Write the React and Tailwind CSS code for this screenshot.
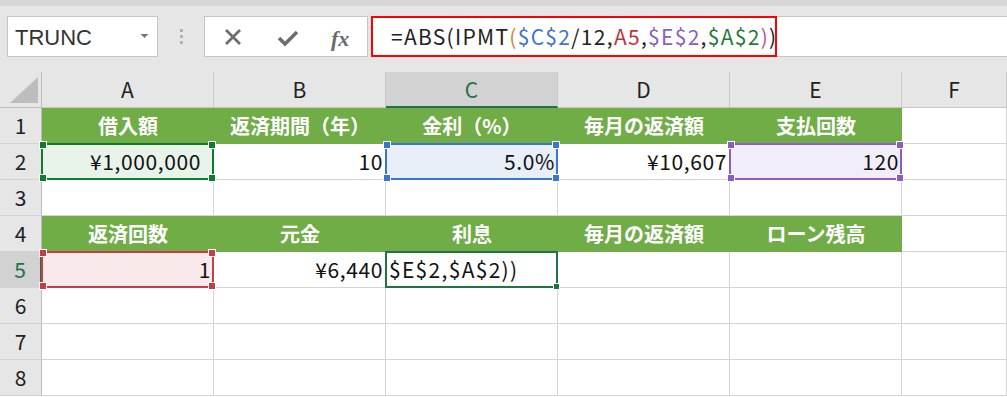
import React from "react";

const FONT = { fontFamily: '"Noto Sans CJK JP", "Noto Sans", sans-serif' };

function Handle({ pos, color }) {
  const p = {
    tl: "-top-[4px] -left-[4px]",
    tr: "-top-[4px] -right-[4px]",
    bl: "-bottom-[4px] -left-[4px]",
    br: "-bottom-[4px] -right-[4px]",
  }[pos];
  return <div className={`absolute ${p} w-[8px] h-[8px] border border-white ${color}`} />;
}

function RangeBox({ border, bg }) {
  return (
    <div className={`absolute -top-px -left-px -right-px -bottom-px border-2 ${border} z-10 pointer-events-none`}>
      <Handle pos="tl" color={bg} />
      <Handle pos="tr" color={bg} />
      <Handle pos="bl" color={bg} />
      <Handle pos="br" color={bg} />
    </div>
  );
}

function Cell({ children, className = "", align = "right", overlay = null, pad = "pr-[2px]" }) {
  return (
    <div
      className={`relative h-[36px] border-r border-b border-[#d4d4d4] flex items-center text-[21px] text-[#111] ${
        align === "right" ? `justify-end tracking-[0.6px] ${pad}` : "justify-start pl-[3px] tracking-[1.3px]"
      } ${className}`}
    >
      <span className="relative z-20 leading-none">{children}</span>
      {overlay}
    </div>
  );
}

function GreenCell({ children }) {
  return (
    <div className="h-[36px] bg-[#70ad47] border-b border-[#70ad47] flex items-center justify-center text-white font-bold text-[20px]">
      <span className="leading-none">{children}</span>
    </div>
  );
}

function RowHead({ n, active }) {
  return (
    <div
      className={`h-[36px] flex items-center justify-center text-[21px] border-b border-[#d4d4d4] ${
        active
          ? "bg-[#d2d2d2] text-[#217346] border-r-2 border-r-[#217346]"
          : "bg-[#e6e6e6] text-[#222] border-r border-r-[#bdbdbd]"
      }`}
    >
      <span className="leading-none">{n}</span>
    </div>
  );
}

function ColHead({ l, active }) {
  return (
    <div
      className={`h-[36px] flex items-center justify-center text-[21px] border-r border-[#c8c8c8] ${
        active ? "bg-[#d2d2d2] text-[#217346] border-b-2 border-b-[#217346]" : "bg-[#e6e6e6] text-[#222] border-b border-b-[#c6c6c6]"
      }`}
    >
      <span className="leading-none">{l}</span>
    </div>
  );
}

export default function App() {
  return (
    <div className="w-[1007px] h-[397px] overflow-hidden bg-white" style={FONT}>
      {/* toolbar */}
      <div className="h-[72px] bg-[#e6e6e6]">
        <div className="h-[6px] bg-[#d8d8d8]" />
        <div className="flex items-center mt-[10px] h-[41px]">
          <div className="ml-[7px] w-[151px] h-[41px] bg-white border border-[#c6c6c6] flex items-center pl-[7px] relative">
            <span className="text-[22px] text-[#333] mt-[2px]" style={{ fontFamily: '"Liberation Sans", Arial, sans-serif' }}>
              TRUNC
            </span>
            <svg className="absolute right-[8px] top-[16px]" width="9" height="6" viewBox="0 0 9 6">
              <path d="M0.5 1 L8.5 1 L4.5 5 Z" fill="#777" />
            </svg>
          </div>
          <div className="w-[46px] flex flex-col items-center gap-[3px]">
            <div className="w-[3px] h-[3px] bg-[#b0b0b0]" />
            <div className="w-[3px] h-[3px] bg-[#b0b0b0]" />
            <div className="w-[3px] h-[3px] bg-[#b0b0b0]" />
          </div>
          <div className="w-[164px] h-[41px] bg-white border border-[#c6c6c6] flex items-center relative">
            <svg className="absolute left-[19px] top-[11px]" width="18" height="18" viewBox="0 0 18 18">
              <path d="M2 2 L16 16 M16 2 L2 16" stroke="#6d6d6d" strokeWidth="2.8" strokeLinecap="butt" />
            </svg>
            <svg className="absolute left-[72px] top-[12px]" width="22" height="18" viewBox="0 0 22 18">
              <path d="M2 9 L8 15 L20 3" stroke="#6d6d6d" strokeWidth="3.6" fill="none" strokeLinejoin="miter" />
            </svg>
            <span
              className="absolute left-[126px] top-[5px] text-[22px] italic font-bold text-[#6a6a6a]"
              style={{ fontFamily: '"Liberation Serif", "Times New Roman", serif' }}
            >
              fx
            </span>
          </div>
          <div className="ml-[3px] w-[406px] h-[41px] bg-white border-2 border-[#ff0000] flex items-center pl-[18px]">
            <span className="text-[21px] tracking-[1.3px] text-[#222] leading-none whitespace-nowrap">
              =ABS(IPMT<span className="text-[#c98a3c]">(</span>
              <span className="text-[#3e74d0]">$C$2</span>/12,
              <span className="text-[#c2343d]">A5</span>,
              <span className="text-[#8d5cc7]">$E$2</span>,
              <span className="text-[#1f7a3a]">$A$2</span>
              <span className="text-[#c8508e]">)</span>)
            </span>
          </div>
          <div className="flex-1 h-[41px] bg-white border-y border-[#c6c6c6]" />
        </div>
      </div>

      {/* grid */}
      <div className="grid grid-cols-[42px_repeat(5,172px)_1fr]">
        {/* column header row */}
        <div className="h-[36px] bg-[#e6e6e6] border-r border-[#bdbdbd] border-b border-b-[#bdbdbd] relative">
          <svg className="absolute right-[3px] bottom-[4px]" width="28" height="26" viewBox="0 0 28 26">
            <path d="M28 0 L28 26 L0 26 Z" fill="#bdbdbd" />
          </svg>
        </div>
        <ColHead l="A" />
        <ColHead l="B" />
        <ColHead l="C" active />
        <ColHead l="D" />
        <ColHead l="E" />
        <ColHead l="F" />

        {/* row 1 */}
        <RowHead n="1" />
        <GreenCell>借入額</GreenCell>
        <GreenCell>返済期間（年）</GreenCell>
        <GreenCell>金利（%）</GreenCell>
        <GreenCell>毎月の返済額</GreenCell>
        <GreenCell>支払回数</GreenCell>
        <Cell />

        {/* row 2 */}
        <RowHead n="2" />
        <Cell pad="pr-[12px]" className="bg-[#e8f3ea]" overlay={<RangeBox border="border-[#117a2c]" bg="bg-[#117a2c]" />}>
          ¥1,000,000
        </Cell>
        <Cell>10</Cell>
        <Cell className="bg-[#e8eff9]" overlay={<RangeBox border="border-[#3a75cf]" bg="bg-[#3a75cf]" />}>
          5.0%
        </Cell>
        <Cell>¥10,607</Cell>
        <Cell className="bg-[#f2eef9]" overlay={<RangeBox border="border-[#8c5cc4]" bg="bg-[#8c5cc4]" />}>
          120
        </Cell>
        <Cell />

        {/* row 3 */}
        <RowHead n="3" />
        <Cell />
        <Cell />
        <Cell />
        <Cell />
        <Cell />
        <Cell />

        {/* row 4 */}
        <RowHead n="4" />
        <GreenCell>返済回数</GreenCell>
        <GreenCell>元金</GreenCell>
        <GreenCell>利息</GreenCell>
        <GreenCell>毎月の返済額</GreenCell>
        <GreenCell>ローン残高</GreenCell>
        <Cell />

        {/* row 5 */}
        <RowHead n="5" active />
        <Cell className="bg-[#f9e9ea]" overlay={<RangeBox border="border-[#c73e4a]" bg="bg-[#c73e4a]" />}>
          1
        </Cell>
        <Cell>¥6,440</Cell>
        <Cell
          align="left"
          overlay={
            <div className="absolute -top-px -left-px -right-px -bottom-px border-2 border-[#217346] z-10">
              <div className="absolute -bottom-[4px] -right-[4px] w-[7px] h-[7px] bg-[#217346] border border-white" />
            </div>
          }
        >
          $E$2,$A$2))
        </Cell>
        <Cell />
        <Cell />
        <Cell />

        {[6, 7, 8].map((n) => (
          <React.Fragment key={n}>
            <RowHead n={String(n)} />
            <Cell />
            <Cell />
            <Cell />
            <Cell />
            <Cell />
            <Cell />
          </React.Fragment>
        ))}
      </div>
    </div>
  );
}
